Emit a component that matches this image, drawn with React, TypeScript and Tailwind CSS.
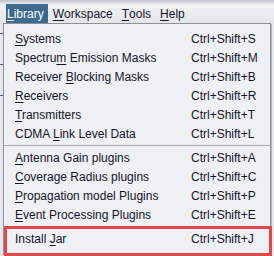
import React from 'react';

type Item = { pre: string; key: string; post: string; shortcut: string } | 'sep';

const items: Item[] = [
  { pre: '', key: 'S', post: 'ystems', shortcut: 'Ctrl+Shift+S' },
  { pre: 'Spectru', key: 'm', post: ' Emission Masks', shortcut: 'Ctrl+Shift+M' },
  { pre: 'Receiver ', key: 'B', post: 'locking Masks', shortcut: 'Ctrl+Shift+B' },
  { pre: '', key: 'R', post: 'eceivers', shortcut: 'Ctrl+Shift+R' },
  { pre: '', key: 'T', post: 'ransmitters', shortcut: 'Ctrl+Shift+T' },
  { pre: 'CDMA ', key: 'L', post: 'ink Level Data', shortcut: 'Ctrl+Shift+L' },
  'sep',
  { pre: '', key: 'A', post: 'ntenna Gain plugins', shortcut: 'Ctrl+Shift+A' },
  { pre: '', key: 'C', post: 'overage Radius plugins', shortcut: 'Ctrl+Shift+C' },
  { pre: '', key: 'P', post: 'ropagation model Plugins', shortcut: 'Ctrl+Shift+P' },
  { pre: '', key: 'E', post: 'vent Processing Plugins', shortcut: 'Ctrl+Shift+E' },
  'sep',
  { pre: 'Install ', key: 'J', post: 'ar', shortcut: 'Ctrl+Shift+J' },
];

const menus = [
  { key: 'L', rest: 'ibrary', active: true },
  { key: 'W', rest: 'orkspace' },
  { key: 'T', rest: 'ools' },
  { key: 'H', rest: 'elp' },
];

export default function App() {
  return (
    <div
      className="relative w-[274px] h-[256px] overflow-hidden bg-[#e6e8eb] text-[12px] text-[#14142a]"
      style={{ fontFamily: '"Liberation Sans", Arial, sans-serif' }}
    >
      {/* window top edge */}
      <div className="h-[4px] bg-[#dde0e4] border-t-2 border-[#c7cbd0]" />
      {/* menu bar */}
      <div className="flex h-[19px] items-stretch pl-[6px] gap-[4px] bg-gradient-to-b from-[#f1f2f4] to-[#e4e6e9]">
        {menus.map((m) => (
          <div
            key={m.key + m.rest}
            className={`flex items-center pl-[1px] pr-[4px] leading-none ${
              m.active ? 'bg-[#3d6a8e] text-white' : ''
            }`}
          >
            <span className="underline underline-offset-2">{m.key}</span>
            {m.rest}
          </div>
        ))}
      </div>
      {/* content behind popup */}
      <div className="flex flex-col gap-[30px] pt-[10px]">
        <div className="h-px w-[3px] bg-[#55585c]" />
        <div className="h-px w-[3px] bg-[#55585c]" />
        <div className="h-px w-[3px] bg-[#55585c]" />
      </div>

      {/* popup menu */}
      <div className="absolute left-[3px] top-[23px] w-[268px] border border-[#8d9095] bg-[#eef0f3] pt-[5px] pb-[6px] shadow-[1px_1px_0_#b5b8bc]">
        {items.map((it, i) =>
          it === 'sep' ? (
            <div key={i} className="h-[5px] flex items-center">
              <div className="h-px w-full bg-[#a9acb1]" />
            </div>
          ) : (
            <div key={i} className="flex h-[19px] items-center leading-none">
              <div className="w-[187px] pl-[11px] whitespace-nowrap">
                {it.pre}
                <span className="underline underline-offset-2">{it.key}</span>
                {it.post}
              </div>
              <div className="whitespace-nowrap">{it.shortcut}</div>
            </div>
          )
        )}
      </div>

      {/* highlight annotation */}
      <div className="absolute left-[4px] top-[226px] w-[268px] h-[30px] border-[3px] border-[#e5484b]" />
    </div>
  );
}
